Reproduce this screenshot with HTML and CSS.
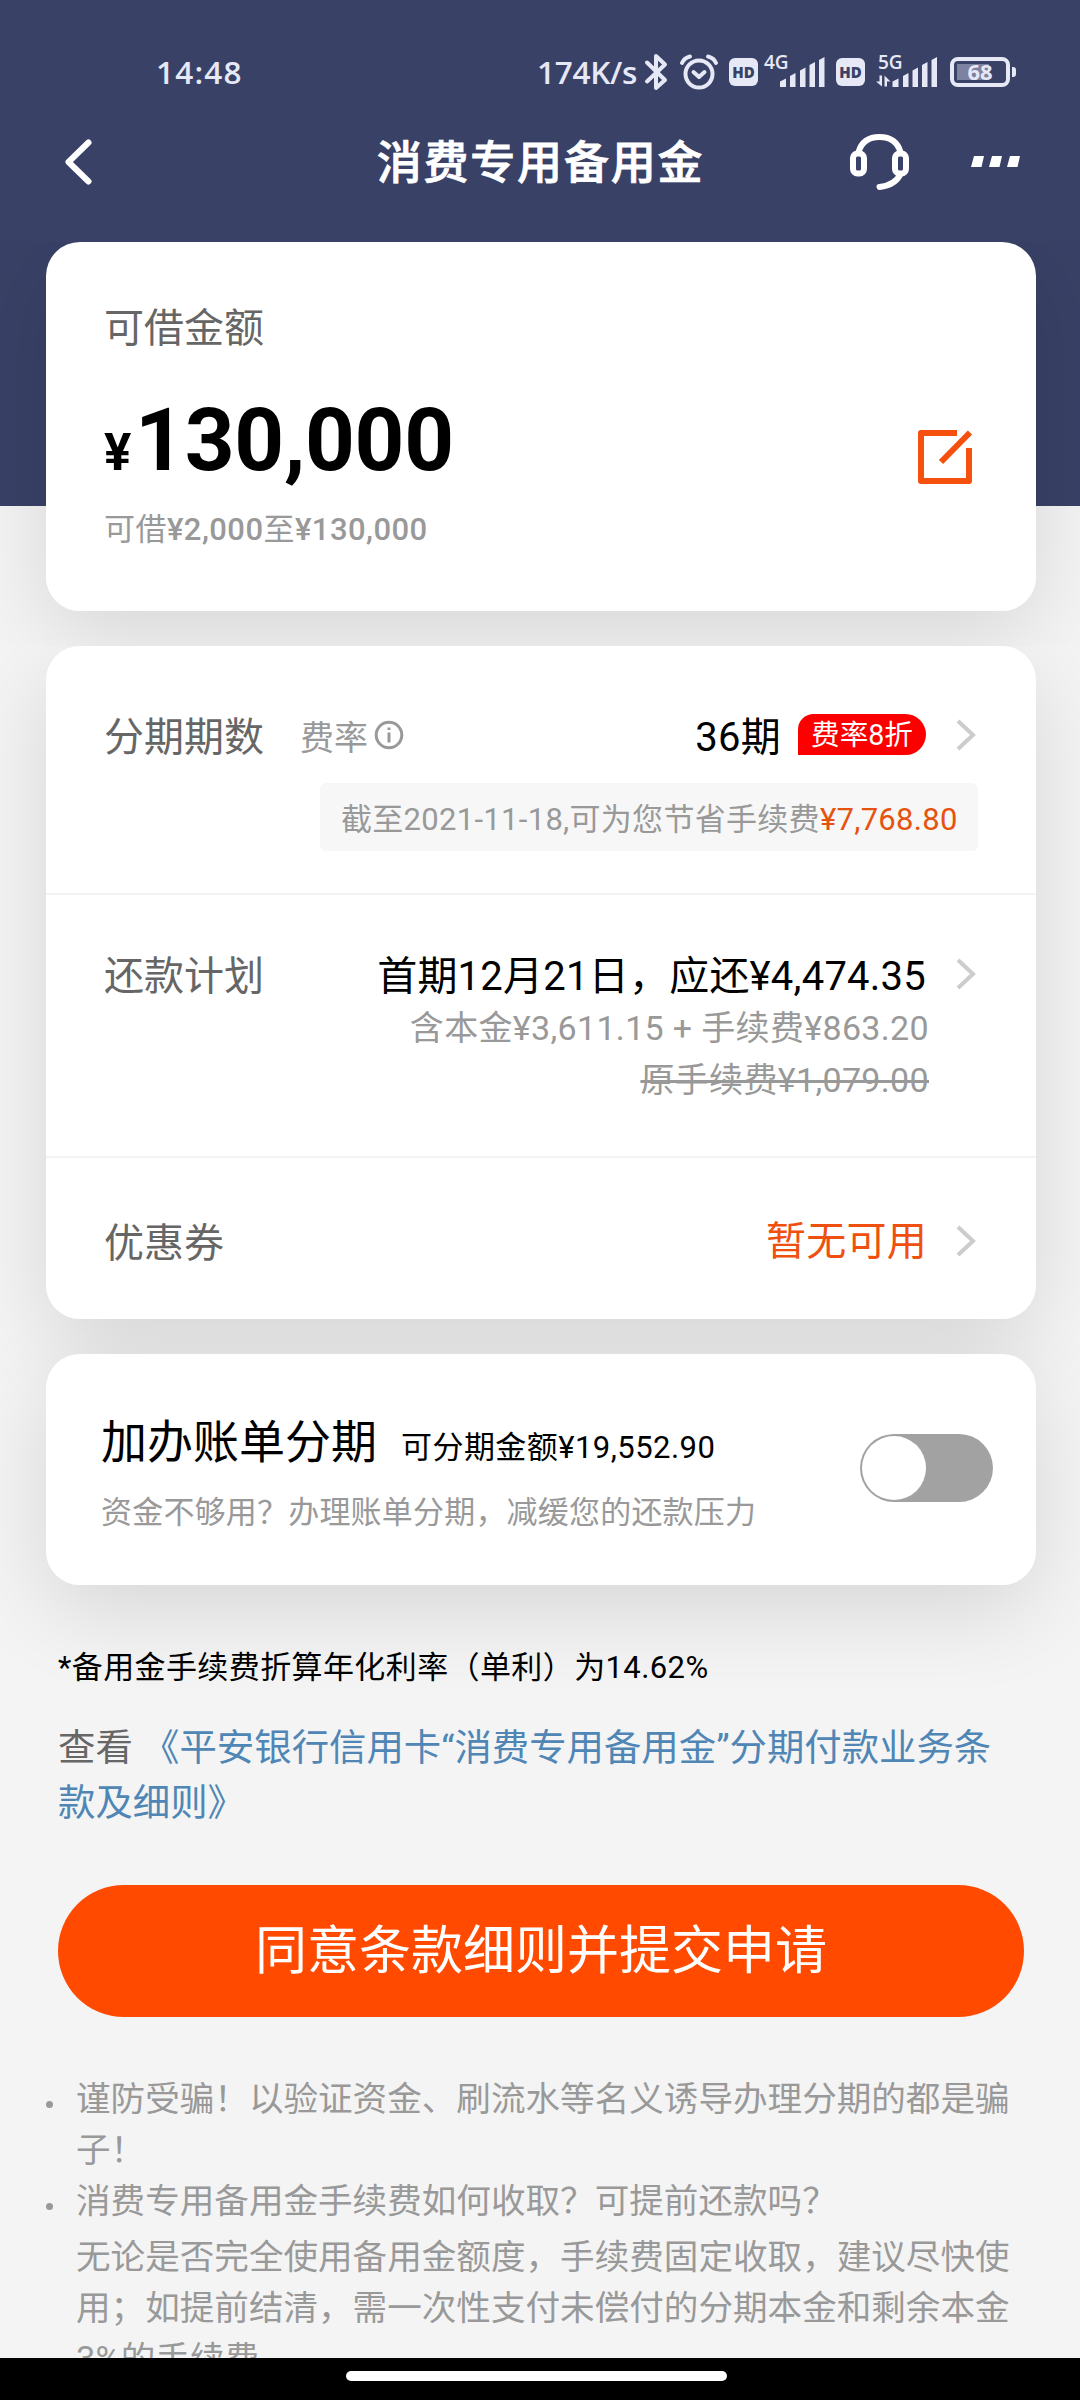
FILE: index.html
```html
<!DOCTYPE html>
<html lang="zh-CN">
<head>
<meta charset="utf-8">
<title>消费专用备用金</title>
<link rel="stylesheet" href="styles.css">
</head>
<body>
<div class="screen">
  <header class="statusbar">
    <span class="clock">14:48</span>
    <div class="status-right">
      <span class="speed">174K/s</span>
      <svg class="bt" width="24" height="38" viewBox="0 0 24 38"><path d="M3 9.500L21 27L12 35V3L21 11.500L3 28.500"/></svg>
      <svg class="alarm" width="40" height="38" viewBox="0 0 40 38"><circle cx="20" cy="21" r="13.500"/><path d="M3 10Q5 5 11 3.500M37 10Q35 5 29 3.500M14.500 19L20 24L25.500 19"/></svg>
      <span class="hd">HD</span>
      <div class="signal">
        <span class="net">4G</span>
        <svg width="62" height="36" viewBox="0 0 62 36"><path d="M16 27.500l6-3v8.500h-6zM26 22l5.500-3v14h-5.500zM36 16.500l5.500-3v19.500h-5.500zM45.500 11l5.500-3v25h-5.500zM55 6l5.500-3v30h-5.500z"/></svg>
      </div>
      <span class="hd">HD</span>
      <div class="signal signal-5g">
        <span class="net">5G</span>
        <svg width="62" height="36" viewBox="0 0 62 36"><path d="M17.500 27.500l6-3v8.500h-6zM28 22l5.500-3v14h-5.500zM37.500 16.500l5.500-3v19.500h-5.500zM47 11l5.500-3v25h-5.500zM56.500 6l5.500-3v30h-5.500zM4.500 21.500h2.500v11l-6-5h3.500zM9.500 32.500h2.500v-5h3.500l-6-6z"/></svg>
      </div>
      <div class="battery"><span>68</span></div>
    </div>
  </header>
  <nav class="titlebar">
    <svg class="back" width="32" height="48" viewBox="0 0 32 48"><path d="M26.500 4.500L6.500 24L26.500 43.500"/></svg>
    <h1>消费专用备用金</h1>
    <div class="tools">
      <svg class="headset" width="60" height="60" viewBox="0 0 60 60"><rect x="4" y="21.500" width="11" height="20" rx="4.500"/><rect x="46" y="21.500" width="11" height="20" rx="4.500"/><path d="M9.500 20Q14 5 30.500 5T51.500 20M51.500 42Q46.500 53 30.500 55"/></svg>
      <svg class="more" width="50" height="12" viewBox="0 0 50 12"><path d="M3 0h10l-2.500 11H0zM21 0h10l-2.500 11H18zM39 0h10l-2.500 11H36z"/></svg>
    </div>
  </nav>

  <main class="content">
    <section class="hero">
      <div class="card amount-card">
        <div>
          <div class="label">可借金额</div>
          <div class="amount"><small>¥</small>130,000</div>
          <div class="range">可借<b>¥2,000</b>至<b>¥130,000</b></div>
        </div>
        <svg class="edit" width="56" height="56" viewBox="0 0 56 56"><path d="M40 4H4V52H52V19" stroke-linejoin="round"/><path d="M24 33L53 3.500"/></svg>
      </div>
    </section>

    <section class="details">
      <div class="card plan-card">
        <div class="row terms">
          <div class="line">
            <span class="label">分期期数</span>
            <span class="rate">费率</span>
            <svg class="info" width="30" height="30" viewBox="0 0 30 30"><circle cx="15" cy="15" r="12.800"/><path d="M15 12.500V22.500M15 7.500V10"/></svg>
            <span class="value push">36期</span>
            <span class="badge">费率8折</span>
            <svg class="chevron" width="22" height="34" viewBox="0 0 22 34"><path d="M3 3L18 17L3 31"/></svg>
          </div>
          <div class="saving">截至2021-11-18,可为您节省手续费<em>¥7,768.80</em></div>
        </div>
        <div class="row repay">
          <div class="line">
            <span class="label">还款计划</span>
            <span class="value push">首期12月21日，应还¥4,474.35</span>
            <svg class="chevron" width="22" height="34" viewBox="0 0 22 34"><path d="M3 3L18 17L3 31"/></svg>
          </div>
          <div class="sub">含本金¥3,611.15 + 手续费¥863.20</div>
          <div class="sub"><span class="strike">原手续费¥1,079.00</span></div>
        </div>
        <div class="row coupon">
          <div class="line">
            <span class="label">优惠券</span>
            <span class="value none push">暂无可用</span>
            <svg class="chevron" width="22" height="34" viewBox="0 0 22 34"><path d="M3 3L18 17L3 31"/></svg>
          </div>
        </div>
      </div>

      <div class="card bill-card">
        <div>
          <div class="bill-title">加办账单分期<span>可分期金额¥19,552.90</span></div>
          <div class="bill-sub">资金不够用？办理账单分期，减缓您的还款压力</div>
        </div>
        <div class="toggle"><i></i></div>
      </div>

      <p class="note">*备用金手续费折算年化利率（单利）为14.62%</p>
      <p class="terms-link">查看 <a>《平安银行信用卡“消费专用备用金”分期付款业务条款及细则》</a></p>
      <div class="submit">同意条款细则并提交申请</div>
      <ul class="tips">
        <li>谨防受骗！以验证资金、刷流水等名义诱导办理分期的都是骗子！</li>
        <li>消费专用备用金手续费如何收取？可提前还款吗？<p>无论是否完全使用备用金额度，手续费固定收取，建议尽快使用；如提前结清，需一次性支付未偿付的分期本金和剩余本金3%的手续费。</p></li>
      </ul>
    </section>
  </main>
  <footer class="homebar"><i></i></footer>
</div>
</body>
</html>
```
FILE: styles.css
```css
* { box-sizing: border-box; }
body, h1, p, ul { margin: 0; padding: 0; }
body {
  font-family: Roboto, "Noto Sans CJK SC", sans-serif;
  color: #000;
}
svg { display: block; flex: none; fill: none; }
.screen {
  width: 1080px;
  height: 2400px;
  display: flex;
  flex-direction: column;
  overflow: hidden;
  background: linear-gradient(#394166 506px, #f4f4f4 506px);
}

/* status bar */
.statusbar {
  height: 108px;
  padding: 36px 63px 0 156px;
  display: flex;
  justify-content: space-between;
  align-items: flex-start;
  color: #e6e8f6;
  font-family: "Open Sans", "Noto Sans", sans-serif;
}
.clock, .speed { font-weight: 600; font-size: 31.5px; line-height: 71px; height: 72px; }
.clock { letter-spacing: 1.2px; }
.status-right { display: flex; align-items: center; height: 72px; }
.speed { width: 107px; letter-spacing: -0.3px; }
.bt, .alarm { stroke: #e6e8f6; stroke-width: 4; stroke-linejoin: round; stroke-linecap: round; }
.alarm { margin-left: 11px; }
.hd {
  width: 29px;
  height: 28px;
  margin-left: 10px;
  border-radius: 6px;
  background: #e6e8f6;
  color: #394166;
  font-size: 15px;
  font-weight: 800;
  line-height: 28px;
  text-align: center;
}
.signal { position: relative; margin-left: 6px; }
.signal svg { fill: #e6e8f6; }
.net { position: absolute; left: 0; top: -4px; font-size: 19px; line-height: 24px; font-weight: 600; }
.signal-5g { margin-left: 10px; }
.signal-5g .net { left: 3px; }
.battery {
  position: relative;
  width: 60px;
  height: 30px;
  margin: 0 7px 0 13px;
  border: 4px solid #e6e8f6;
  border-radius: 8px;
  background: linear-gradient(#7c82a0, #7c82a0) 3px 3px / 32px 16px no-repeat;
  font-size: 22px;
  font-weight: 700;
  line-height: 21px;
  text-align: center;
}
.battery::after {
  content: "";
  position: absolute;
  right: -10px;
  top: 6px;
  width: 4px;
  height: 10px;
  border-radius: 0 3px 3px 0;
  background: #e6e8f6;
}

/* title bar */
.titlebar {
  height: 134px;
  padding: 0 59px 27px 62px;
  display: grid;
  grid-template-columns: 1fr auto 1fr;
  align-items: center;
  color: #fff;
}
.back { stroke: #fff; stroke-width: 6; stroke-linecap: round; stroke-linejoin: round; }
.titlebar h1 {
  margin: 5px 2px 0 0;
  font-size: 45px;
  font-weight: 500;
  letter-spacing: 1.8px;
  line-height: 60px;
}
.tools { display: flex; align-items: center; justify-content: flex-end; gap: 62px; }
.headset { stroke: #fff; stroke-width: 6; stroke-linecap: round; }
.more { fill: #fff; }

/* cards */
.content { flex: 1; min-height: 0; overflow: hidden; }
.hero, .details { padding: 0 44px 0 46px; isolation: isolate; }
.card {
  position: relative;
  background: #fff;
  border-radius: 34px;
}
.card::before {
  content: "";
  position: absolute;
  inset: 0;
  z-index: -1;
  border-radius: 34px;
  box-shadow: 0 25px 90px rgba(0, 0, 0, 0.12);
}
.label { font-size: 40px; line-height: 60px; color: #666; }
.amount-card {
  height: 369px;
  padding: 57px 63px 0 58px;
  display: flex;
  justify-content: space-between;
}
.amount {
  height: 100px;
  margin-top: 31px;
  font-size: 87px;
  font-weight: 700;
  line-height: 100px;
  letter-spacing: -0.3px;
}
.amount small { font-size: 51px; margin-right: 4px; }
.range { margin-top: 17px; font-size: 31px; line-height: 46px; letter-spacing: 0.45px; color: #999; }
.range b { font-weight: 500; }
.edit { margin-top: 130px; stroke: #f5500d; stroke-width: 6; }

.hero { height: 404px; }
.details { height: 1712px; background: #f4f4f4; overflow: hidden; }
.plan-card { height: 673px; }
.row { padding: 0 58px; border-bottom: 2px solid #f3f3f3; }
.row:last-child { border: 0; }
.line { display: flex; align-items: center; height: 60px; }
.push { margin-left: auto; }
.terms { height: 249px; padding-top: 62px; }
.rate { margin: -6px 0 0 36px; font-size: 34px; color: #999; }
.info { margin: -6px 0 0 6px; stroke: #999; stroke-width: 3; }
.value { font-size: 40px; line-height: 60px; letter-spacing: 0.23px; }
.none { margin-top: -4px; color: #f0500f; }
.badge {
  width: 128px;
  height: 41px;
  margin-left: 17px;
  margin-top: -7px;
  border-radius: 16px 21px 21px 0;
  background: #fc0000;
  color: #fff;
  font-size: 28.6px;
  line-height: 42px;
  text-align: center;
}
.chevron { margin: -6px 1px 0 29px; stroke: #ccc; stroke-width: 4; }
.saving {
  width: 658px;
  height: 68px;
  margin: 15px 0 0 auto;
  padding-left: 21px;
  border-radius: 6px;
  background: #f7f7f7;
  color: #999;
  font-size: 31px;
  line-height: 73px;
  letter-spacing: 0.3px;
  white-space: nowrap;
}
.saving em { font-style: normal; color: #e5530f; }
.repay { height: 263px; padding-top: 56px; }
.repay .line { height: 51px; }
.repay .chevron { margin-top: -5px; }
.sub {
  height: 52px;
  padding-right: 49px;
  color: #999;
  font-size: 34px;
  line-height: 52px;
  letter-spacing: 0.34px;
  text-align: right;
}
.strike { text-decoration: line-through; text-decoration-thickness: 3px; }
.coupon { padding-top: 56px; }
.coupon .push { margin-right: -1px; }

.bill-card {
  height: 231px;
  margin-top: 35px;
  padding: 52px 43px 0 55px;
  display: flex;
  justify-content: space-between;
}
.bill-title { height: 72px; font-size: 46px; line-height: 72px; }
.bill-title span { margin-left: 24px; font-size: 31px; letter-spacing: 0.45px; }
.bill-sub { color: #999; font-size: 31px; line-height: 69px; letter-spacing: 0.2px; }
.toggle { width: 133px; height: 68px; margin-top: 28px; padding: 2px; border-radius: 34px; background: #a2a2a2; }
.toggle i { display: block; width: 64px; height: 64px; border-radius: 50%; background: #fff; }

/* fine print */
.note { margin: 60px 0 0 12px; font-size: 31px; line-height: 46px; letter-spacing: 0.4px; }
.terms-link { margin: 30px 0 0 12px; width: 950px; font-size: 37.4px; line-height: 55px; color: #666; }
.terms-link a { color: #4f86b5; }
.submit {
  height: 132px;
  margin: 54px 12px 0 12px;
  border-radius: 66px;
  background: #ff4a00;
  color: #fff;
  font-size: 52px;
  line-height: 134px;
  text-align: center;
}
.tips {
  width: 972px;
  margin-top: 57px;
  padding-left: 30px;
  list-style: none;
  color: #999;
  font-size: 34.6px;
  line-height: 51px;
}
.tips li { position: relative; }
.tips li::before {
  content: "";
  position: absolute;
  left: -30px;
  top: 27px;
  width: 7px;
  height: 7px;
  border-radius: 50%;
  background: #999;
}
.tips p { margin-top: 5px; }

.homebar { height: 42px; padding-top: 13px; background: #000; }
.homebar i { display: block; width: 381px; height: 10px; margin-left: 346px; border-radius: 5px; background: #fff; }
.titlebar h1 { -webkit-text-stroke: 0.8px #fff; }
```
